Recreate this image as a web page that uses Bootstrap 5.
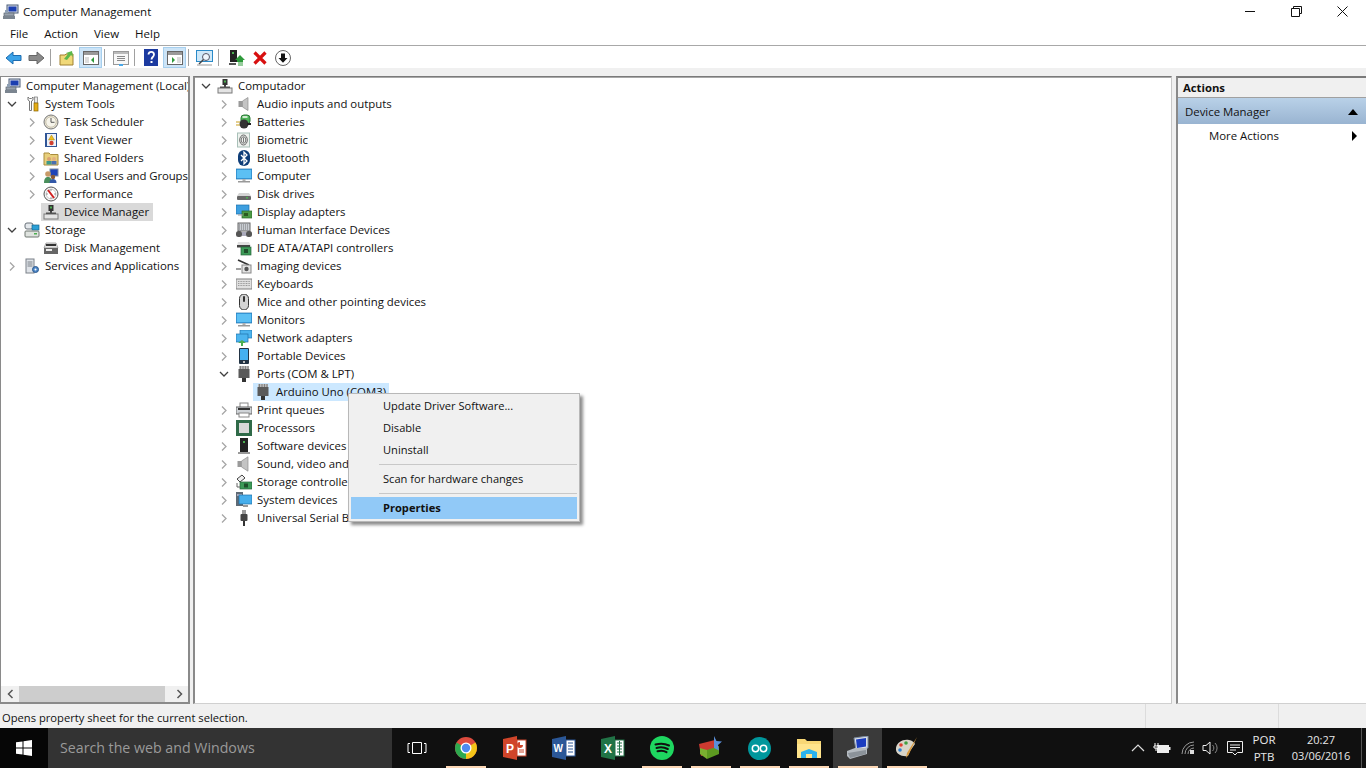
<!DOCTYPE html>
<html lang="en">
<head>
<meta charset="utf-8">
<title>Computer Management</title>
<link href="https://cdn.jsdelivr.net/npm/bootstrap@5.3.0/dist/css/bootstrap.min.css" rel="stylesheet">
<style>
html,body{height:100%;margin:0}
body{width:1366px;height:768px;overflow:hidden;background:#fff;font-family:"Open Sans","Noto Sans",sans-serif;font-size:11.4px;color:#111;line-height:18px}
svg{display:block;flex:none}
.title-row{height:23px;background:#fff}
.title-ico{margin:0 4px 0 3px}
.title-txt{font-size:11.5px}
.winbtn{width:46px;height:23px}
.win-wrap{padding-right:1px}
.menu-row{height:22px;background:#fff;padding-left:2px;font-size:11.5px}
.menu-item{padding:0 8px}
.tool-row{height:23px;background:#fff;border-top:1px solid #a8a8a8;padding:1px 0 0 2px}
.tb{width:23px;height:21px}
.tb-w{width:24px}
.tb-on{width:23px;height:21px;background:#cce4f7;border:1px solid #a6cfee}
.tb-gap{margin-left:1px}
.tb-gap2{margin-left:2px}
.tsep{width:1px;height:17px;background:#a0a0a0;margin:0 4px 0 2px}
.work{height:636px;background:#f0f0f0;padding-top:8px}
.left-pane{width:190px;border:1px solid #8a8a8a;border-width:1px 2px 2px 1px;background:#fff;overflow:hidden}
.left-scroll{height:16px;background:#f0f0f0;margin-top:auto}
.sc-btn{width:18px}
.sc-thumb{height:16px;width:146px;background:#cdcdcd}
.mid-pane{width:979px;margin-left:3px;background:#fff;border-top:1px solid #7a7a7a;box-shadow:inset 0 1px 0 #a8a8a8;border-left:2px solid #8a8a8a;border-right:1px solid #c8c8c8;border-bottom:1px solid #d0d0d0}
.right-pane{width:190px;margin-left:4px;background:#fff;border-top:2px solid #7a7a7a;border-left:2px solid #8a8a8a;border-bottom:1px solid #d0d0d0}
.tree-row{height:18px;white-space:nowrap;position:relative}
.chev{width:10px;height:18px}
.ico{width:16px;height:16px}
.pane-l0{padding-left:4px}
.lv1{padding-left:6px}
.lv2{padding-left:26px}
.lv2b{padding-left:40px}
.lv1 .gap-ico{margin-left:7px}
.lv2 .gap-ico{margin-left:6px}
.gap-txt{margin-left:5px}
.txt-tight{letter-spacing:-.1px}
.sel-grey{background:#d9d9d9;padding:0 4px 0 2px;height:18px}
.sel-blue{background:#cce8ff;padding:0 3px 0 2px;height:18px}
.m1{padding-left:24px}
.m0{padding-left:6px}
.m2{padding-left:58px}
.m-ico0{margin-left:6px}
.m-ico{margin-left:7px}
.m-txt{margin-left:5px}
.m-clip{display:block;max-width:92px;overflow:hidden}
.act-head{height:20px;background:#f0f0f0;font-weight:700;padding-left:5px;border-bottom:1px solid #a0a0a0;font-size:11.3px}
.act-sub{height:26px;padding:1px 8px 0 7px;background:linear-gradient(#b9d1e8,#99b4d1)}
.act-more{height:24px;padding:0 9px 0 31px}
.tri-up{width:0;height:0;border:5px solid transparent;border-bottom:6px solid #000;border-top:0}
.tri-right{width:0;height:0;border:5px solid transparent;border-left:5px solid #000;border-right:0}
.status{height:24px;background:#f0f0f0;padding-left:2px;font-size:11.2px}
.status-txt{padding-top:3px}
.stat-a{margin-left:auto;width:133px;height:24px;border-left:1px solid #dcdcdc}
.stat-b{width:88px;height:24px;border-left:1px solid #dcdcdc}
.task{height:40px;background:#101010;color:#fff;position:relative}
.start{width:48px;height:40px;background:#060606}
.search{width:344px;height:40px;background:#333;color:#9a9a9a;font-size:14.2px;padding-left:12px}
.tv{width:49px;height:40px}
.tapp{width:49px;height:40px;position:relative}
.tapp-on{background:#3a3a3a}
.tapp-run::after{content:"";position:absolute;left:5px;right:4px;bottom:0;height:2px;background:#fcd7b5}
.tray{margin-left:auto;margin-right:4px;height:40px;border-right:1px solid #555}
.t-gap6{margin-left:6px}
.t-gap10{margin-left:10px}
.tray-lang{width:34px;font-size:11.5px;line-height:17px;color:#e8e8e8}
.tray-clock{width:80px;font-size:11px;line-height:16px;color:#e8e8e8}
.pop{position:absolute;left:348px;top:393px;width:232px;height:129px;background:#f0f0f0;border:1px solid #b8b8b8;box-shadow:3px 3px 3px rgba(0,0,0,.45);padding:1px 2px 2px;z-index:5;font-size:11.1px}
.pop-item{height:22px;padding-left:32px;display:flex;align-items:center}
.pop-sep{height:1px;background:#c8c8c8;margin:3px 0 3px 28px}
.pop-sel{background:#91c9f7;font-weight:700}
</style>
</head>
<body>
<svg width="0" height="0" class="position-absolute">
<defs>
<symbol id="c-r" viewBox="0 0 10 18"><path d="M3 5.500 7 9.500 3 13.500" fill="none" stroke="#a6a6a6" stroke-width="1.300"/></symbol>
<symbol id="c-d" viewBox="0 0 10 18"><path d="M1 7 5 11 9 7" fill="none" stroke="#404040" stroke-width="1.300"/></symbol>
<symbol id="computer" viewBox="0 0 16 16"><rect x="4" y="1" width="11" height="8" fill="#d8dde6" stroke="#4a5c78"/><rect x="5.500" y="2.500" width="8" height="5" fill="#1c3fb0"/><rect x="1" y="9" width="10" height="3" fill="#9aa3ae" stroke="#5a6470" stroke-width=".7"/><rect x="0" y="12" width="12" height="3" fill="#7b8590"/><rect x="2" y="6" width="3" height="3" fill="#8fa0b4"/></symbol>
<symbol id="devmgr" viewBox="0 0 16 16"><rect x="5.500" y="1" width="5" height="6" fill="#333"/><rect x="7" y="2.500" width="2" height="2" fill="#4caf50"/><rect x="7" y="7" width="2" height="3" fill="#444"/><rect x="1" y="10" width="14" height="5" fill="#e4e4e4" stroke="#7a7a7a"/><rect x="3" y="8.500" width="10" height="1.600" fill="#555"/></symbol>
<symbol id="tools" viewBox="0 0 16 16"><path d="M4 1v3l1.500 1v9.500h2V5L9 4V1L7.500 2.500h-2z" fill="#fff" stroke="#777"/><rect x="10.500" y="1" width="3" height="6" fill="#e8e8e8" stroke="#777" stroke-width=".7"/><rect x="10" y="7" width="4" height="8" fill="#e5ad16" stroke="#8a6400" stroke-width=".7"/></symbol>
<symbol id="clock" viewBox="0 0 16 16"><circle cx="8" cy="8" r="7" fill="#e8e4d4" stroke="#777"/><circle cx="8" cy="8" r="5.200" fill="#f6f4ea" stroke="#b0a890" stroke-width=".6"/><path d="M8 4v4.300h3.500" fill="none" stroke="#555" stroke-width="1"/></symbol>
<symbol id="book" viewBox="0 0 16 16"><rect x="2" y="1" width="12" height="14" fill="#2f5597"/><rect x="4" y="2" width="9" height="12" fill="#eef2f8"/><path d="M8.500 3 11.500 8h-6z" fill="#f0c020" stroke="#8a6a00" stroke-width=".4"/><circle cx="8.500" cy="11" r="2.200" fill="#d04030"/></symbol>
<symbol id="share" viewBox="0 0 16 16"><path d="M1 3h5l1.500 1.500H15V15H1z" fill="#e8cf7c" stroke="#a88c3c"/><circle cx="6" cy="9" r="2" fill="#d9a070"/><rect x="3.500" y="11" width="5" height="3.500" fill="#3c9a8a"/><circle cx="11" cy="9" r="2" fill="#e2b080"/><rect x="8.500" y="11" width="5" height="3.500" fill="#4a70b0"/></symbol>
<symbol id="users" viewBox="0 0 16 16"><rect x="7" y="1" width="8" height="7" fill="#1d44b8" stroke="#7a8aa0"/><circle cx="5" cy="6" r="2.800" fill="#c89a68"/><path d="M1 15c0-5 2-6 4-6s4 1 4 6z" fill="#4a8f5c"/><circle cx="10" cy="9" r="2.200" fill="#8a5a34"/><path d="M6.500 15c0-3 1.500-4 3.500-4s3.500 1 3.500 4z" fill="#3358a8"/></symbol>
<symbol id="perf" viewBox="0 0 16 16"><circle cx="8" cy="8" r="7" fill="#f4f4f4" stroke="#555"/><circle cx="8" cy="8" r="4.800" fill="#fff" stroke="#aaa" stroke-width=".6"/><path d="M5 4 11 12" stroke="#d02020" stroke-width="2"/><path d="M8 3v2M8 11v2M3 8h2M11 8h2" stroke="#777" stroke-width=".7"/></symbol>
<symbol id="storage" viewBox="0 0 16 16"><rect x="1" y="1" width="8" height="6" rx="2" fill="#e4e8ec" stroke="#687078"/><rect x="8" y="3" width="7" height="5" fill="#2a9fd6" stroke="#18668c" stroke-width=".7"/><rect x="1" y="9" width="14" height="6" rx="1" fill="#dfe3df" stroke="#6f7770"/><rect x="10" y="11" width="3" height="1.500" fill="#4caf50"/></symbol>
<symbol id="disk" viewBox="0 0 16 16"><path d="M3 3h10l2 5H1z" fill="#e4e4e4" stroke="#8a8a8a" stroke-width=".7"/><rect x="3" y="4" width="10" height="2" fill="#333"/><rect x="1" y="8" width="14" height="6" fill="#666"/><rect x="3" y="9" width="6" height="2" fill="#eee"/></symbol>
<symbol id="svc" viewBox="0 0 16 16"><rect x="2" y="1" width="8" height="14" fill="#dfe3e8" stroke="#7a8088"/><path d="M3.500 4h5M3.500 6h5M3.500 8h5" stroke="#7a8088"/><circle cx="11.500" cy="11.500" r="3" fill="#4d86c6" stroke="#2c5a90"/><circle cx="11.500" cy="11.500" r="1" fill="#fff"/></symbol>
<symbol id="audio" viewBox="0 0 16 16"><rect x="2.500" y="5" width="4" height="6" fill="#9a9a9a"/><path d="M6.500 5 12 1.500v13L6.500 11z" fill="#c4c4c4" stroke="#8f8f8f" stroke-width=".7"/></symbol>
<symbol id="battery" viewBox="0 0 16 16"><rect x="5" y="1" width="9" height="9" rx="3" fill="#4fb65a" stroke="#2d7a38"/><rect x="6.500" y="2" width="5" height="2" fill="#cfeccf"/><circle cx="8" cy="10" r="4.500" fill="#333"/><path d="M0 8h4M0 11h4" stroke="#c9a020" stroke-width="1.200"/><path d="M11 10h4" stroke="#222" stroke-width="2"/></symbol>
<symbol id="finger" viewBox="0 0 16 16"><rect x="1.500" y="1" width="12" height="14" fill="#eef2ee" stroke="#a8c0b8"/><ellipse cx="7.500" cy="8" rx="3.800" ry="5" fill="none" stroke="#666"/><ellipse cx="7.500" cy="8" rx="2.300" ry="3.300" fill="none" stroke="#777"/><path d="M7.500 5.500v5" stroke="#777"/></symbol>
<symbol id="bt" viewBox="0 0 16 16"><rect x="2" y="0" width="12" height="16" rx="6" fill="#0f3d78"/><path d="M5 5 11 11 8 14V2l3 3-6 6" fill="none" stroke="#fff" stroke-width="1.300"/></symbol>
<symbol id="monitor" viewBox="0 0 16 16"><rect x="0" y="1" width="16" height="10" fill="#43a8ea" stroke="#1e6fa8" stroke-width=".7"/><rect x="1" y="2" width="14" height="8" fill="#5cc0f4"/><rect x="6.500" y="11" width="3" height="2" fill="#b0b0b0"/><rect x="2" y="13" width="12" height="1.500" fill="#999"/></symbol>
<symbol id="hdd" viewBox="0 0 16 16"><path d="M3 7h10l2 3H1z" fill="#d4d4d4"/><rect x="1" y="10" width="14" height="4" rx="1" fill="#666"/><rect x="10" y="11" width="2" height="1.500" fill="#4caf50"/></symbol>
<symbol id="display" viewBox="0 0 16 16"><rect x="0" y="1" width="13" height="9" fill="#3d9fe0" stroke="#1e6fa8" stroke-width=".7"/><rect x="6" y="7" width="10" height="7" fill="#4c9a44" stroke="#2c6a28" stroke-width=".7"/><rect x="8" y="9" width="4" height="3" fill="#2c5a20"/><path d="M2 11h5" stroke="#999"/></symbol>
<symbol id="hid" viewBox="0 0 16 16"><rect x="2" y="1" width="12" height="8" fill="#c8ccd2" stroke="#666"/><path d="M3 3h10M3 5h10M3 7h10" stroke="#777" stroke-dasharray="1 1"/><rect x="0" y="9" width="6" height="6" rx="2.500" fill="#555"/><rect x="10" y="9" width="6" height="6" rx="2.500" fill="#555"/><rect x="6" y="10" width="4" height="4" fill="#aab"/></symbol>
<symbol id="ide" viewBox="0 0 16 16"><path d="M2 2h11l2 4H1z" fill="#e0e0e0"/><rect x="1" y="5" width="13" height="2.500" fill="#444"/><rect x="5" y="7" width="10" height="8" fill="#3d9a58" stroke="#25653a" stroke-width=".7"/><rect x="8" y="9" width="4" height="4" fill="#1f4f2c"/></symbol>
<symbol id="cam" viewBox="0 0 16 16"><path d="M2 2 13 7" stroke="#333" stroke-width="1.600"/><rect x="6" y="7" width="9" height="8" fill="#e4e4e4" stroke="#888"/><circle cx="10.500" cy="11" r="2.200" fill="#555"/><path d="M0 11h5" stroke="#888" stroke-width="1.600"/></symbol>
<symbol id="kbd" viewBox="0 0 16 16"><rect x="0" y="3" width="16" height="10" fill="#e0e0e0" stroke="#808080"/><path d="M2 5.500h12M2 7.500h12M2 9.500h12" stroke="#9a9a9a" stroke-dasharray="1 .6"/></symbol>
<symbol id="mouse" viewBox="0 0 16 16"><rect x="3.500" y="0" width="9" height="16" rx="4.500" fill="#d4d4d4" stroke="#333"/><rect x="7" y="2" width="2" height="6" rx="1" fill="#333"/></symbol>
<symbol id="net" viewBox="0 0 16 16"><rect x="4" y="0" width="12" height="8" fill="#4cb4ee" stroke="#1e6fa8" stroke-width=".7"/><rect x="0" y="4" width="12" height="8" fill="#4cb4ee" stroke="#1e6fa8" stroke-width=".7"/><path d="M5 16V13H2l4-3 4 3H7v3z" fill="#4caf50"/></symbol>
<symbol id="portable" viewBox="0 0 16 16"><rect x="3" y="0" width="10" height="16" rx="1" fill="#223344"/><rect x="4" y="1" width="8" height="11" fill="#45b0f0"/><rect x="7" y="13" width="2" height="2" fill="#bbb"/></symbol>
<symbol id="port" viewBox="0 0 16 16"><rect x="3" y="0" width="10" height="3" fill="#b9b9b9"/><rect x="2.500" y="3" width="11" height="9" fill="#5a5a5a"/><path d="M4.500 0v3M7 0v3M9.500 0v3M12 0v3" stroke="#666" stroke-width=".7"/><rect x="6" y="12" width="4" height="4" fill="#333"/></symbol>
<symbol id="printer" viewBox="0 0 16 16"><rect x="4" y="1" width="8" height="5" fill="#fff" stroke="#888"/><rect x="0" y="5" width="16" height="7" fill="#d0d4d8" stroke="#666"/><rect x="2" y="6" width="12" height="2" fill="#333"/><rect x="3" y="11" width="10" height="4" fill="#fff" stroke="#888"/></symbol>
<symbol id="cpu" viewBox="0 0 16 16"><rect x="0" y="0" width="16" height="16" fill="#2f6a48"/><rect x="3" y="3" width="10" height="10" fill="#d8d8d8"/></symbol>
<symbol id="tower" viewBox="0 0 16 16"><rect x="4" y="0" width="8" height="14" fill="#222"/><rect x="7" y="3" width="2" height="2" fill="#4caf50"/><rect x="2" y="14" width="12" height="2" fill="#999"/></symbol>
<symbol id="sound" viewBox="0 0 16 16"><rect x="1.500" y="5" width="4" height="6" fill="#9a9a9a"/><path d="M5.500 5 12 .8v14.400L5.500 11z" fill="#c4c4c4" stroke="#8f8f8f" stroke-width=".7"/></symbol>
<symbol id="store" viewBox="0 0 16 16"><path d="M6 1 1 5l3 3 5-4z" fill="#f0f0f0" stroke="#444"/><rect x="4" y="8" width="12" height="7" fill="#3d9a58" stroke="#25653a" stroke-width=".7"/><rect x="8" y="9.500" width="4" height="4" fill="#1f4f2c"/><path d="M1 9v4h3" stroke="#666" fill="none"/></symbol>
<symbol id="sys" viewBox="0 0 16 16"><rect x="0" y="0" width="7" height="14" fill="#5f6b76"/><rect x="1" y="2" width="5" height="2" fill="#aab"/><rect x="3" y="3" width="13" height="9" fill="#46aeec" stroke="#1e6fa8" stroke-width=".7"/><rect x="7" y="13" width="5" height="2" fill="#999"/></symbol>
<symbol id="usb" viewBox="0 0 16 16"><rect x="6" y="0" width="4" height="4" fill="#9a9a9a"/><rect x="4.500" y="4" width="7" height="7" rx="1" fill="#444"/><rect x="7" y="11" width="2" height="5" fill="#333"/></symbol>
</defs>
</svg>

<div class="title-row d-flex align-items-center">
  <svg class="title-ico" width="16" height="16"><use href="#computer"/></svg>
  <span class="title-txt">Computer Management</span>
  <div class="ms-auto d-flex win-wrap">
    <div class="winbtn d-flex align-items-center justify-content-center"><svg width="11" height="11"><path d="M0 5.500h10" stroke="#111"/></svg></div>
    <div class="winbtn d-flex align-items-center justify-content-center"><svg width="11" height="11"><path d="M2.500 2.500V.5h8v7h-2M.5 2.500h8v8h-8z" fill="none" stroke="#111"/></svg></div>
    <div class="winbtn d-flex align-items-center justify-content-center"><svg width="11" height="11"><path d="M.5.500l10 10M10.500.500l-10 10" stroke="#111"/></svg></div>
  </div>
</div>

<div class="menu-row d-flex align-items-center">
  <span class="menu-item">File</span><span class="menu-item">Action</span><span class="menu-item">View</span><span class="menu-item">Help</span>
</div>

<div class="tool-row d-flex align-items-center">
  <div class="tb d-flex align-items-center justify-content-center"><svg width="17" height="14"><path d="M8 1 1 7l7 6V9.500h8v-5H8z" fill="#3ba2e8" stroke="#1c6cb0"/></svg></div>
  <div class="tb d-flex align-items-center justify-content-center"><svg width="17" height="14"><path d="M9 1l7 6-7 6V9.500H1v-5h8z" fill="#8a8a8a" stroke="#666"/></svg></div>
  <div class="tsep"></div>
  <div class="tb tb-w d-flex align-items-center justify-content-center"><svg width="16" height="16"><path d="M1 5h5l1-1h7v11H1z" fill="#f0d878" stroke="#a08030"/><path d="M5 9 9 4l-2-1 6-2 1 6-2-2-4 5z" fill="#5cb84a"/></svg></div>
  <div class="tb-on d-flex align-items-center justify-content-center"><svg width="16" height="14"><rect x=".5" y=".5" width="15" height="13" fill="#fff" stroke="#666"/><rect x="1" y="1" width="14" height="3" fill="#999"/><rect x="2" y="6" width="4" height="6" fill="#ddd"/><path d="M11 6v6l-3-3z" fill="#2e9a3a"/></svg></div>
  <div class="tsep"></div>
  <div class="tb d-flex align-items-center justify-content-center"><svg width="16" height="16"><rect x=".5" y="1.500" width="15" height="13" fill="#f8f8f8" stroke="#999"/><rect x="1" y="2" width="14" height="2" fill="#bbb"/><path d="M4 6.500h8M4 8.500h8M4 10.500h8" stroke="#888"/><rect x="6" y="14" width="4" height="2" fill="#4aa8e8"/></svg></div>
  <div class="tsep"></div>
  <div class="tb d-flex align-items-center justify-content-center"><svg width="14" height="17"><rect width="14" height="17" fill="#1c3aa0"/><path d="M4.500 5.500C4.500 2 10 2 10 5.500 10 8 7.500 8 7.500 10.500" fill="none" stroke="#fff" stroke-width="1.800"/><rect x="6.500" y="12" width="2" height="2" fill="#fff"/></svg></div>
  <div class="tb-on tb-gap d-flex align-items-center justify-content-center"><svg width="16" height="14"><rect x=".5" y=".5" width="15" height="13" fill="#fff" stroke="#666"/><rect x="1" y="1" width="14" height="3" fill="#999"/><rect x="10" y="6" width="4" height="6" fill="#ddd"/><path d="M5 6v6l3-3z" fill="#2e9a3a"/></svg></div>
  <div class="tsep"></div>
  <div class="tb d-flex align-items-center justify-content-center"><svg width="17" height="16"><rect x=".5" y=".5" width="16" height="11" fill="#cfe8f8" stroke="#2a8ac8"/><circle cx="10" cy="7" r="3.500" fill="#eef6fc" stroke="#556"/><path d="M7.500 9.500 3 14" stroke="#444" stroke-width="1.500"/><path d="M1 15h15" stroke="#999"/></svg></div>
  <div class="tsep"></div>
  <div class="tb tb-gap2 d-flex align-items-center justify-content-center"><svg width="16" height="16"><rect x="1" y="0" width="7" height="12" fill="#222"/><rect x="3" y="2" width="2" height="2" fill="#4caf50"/><rect x="0" y="13" width="7" height="2" fill="#555"/><path d="M8 12v-2H6l5-5 5 5h-2v2z" fill="#2e9a3a"/><path d="M9 13h5M9 15h5" stroke="#2e9a3a"/></svg></div>
  <div class="tb d-flex align-items-center justify-content-center"><svg width="14" height="14"><path d="M1.500 1.500l11 11M12.500 1.500l-11 11" stroke="#d81010" stroke-width="3.200"/></svg></div>
  <div class="tb d-flex align-items-center justify-content-center"><svg width="16" height="16"><circle cx="8" cy="8" r="7.500" fill="#fff" stroke="#666"/><path d="M6 3.500h4V8h2.500L8 12.800 3.500 8H6z" fill="#111"/></svg></div>
</div>

<div class="work d-flex">
  <div class="left-pane d-flex flex-column">
    <div class="flex-grow-1 overflow-hidden">
      <div class="tree-row pane-l0 d-flex align-items-center"><svg class="ico"><use href="#computer"/></svg><span class="gap-txt">Computer Management (Local)</span></div>
      <div class="tree-row lv1 d-flex align-items-center"><svg class="chev"><use href="#c-d"/></svg><svg class="ico gap-ico"><use href="#tools"/></svg><span class="gap-txt">System Tools</span></div>
      <div class="tree-row lv2 d-flex align-items-center"><svg class="chev"><use href="#c-r"/></svg><svg class="ico gap-ico"><use href="#clock"/></svg><span class="gap-txt">Task Scheduler</span></div>
      <div class="tree-row lv2 d-flex align-items-center"><svg class="chev"><use href="#c-r"/></svg><svg class="ico gap-ico"><use href="#book"/></svg><span class="gap-txt">Event Viewer</span></div>
      <div class="tree-row lv2 d-flex align-items-center"><svg class="chev"><use href="#c-r"/></svg><svg class="ico gap-ico"><use href="#share"/></svg><span class="gap-txt">Shared Folders</span></div>
      <div class="tree-row lv2 d-flex align-items-center"><svg class="chev"><use href="#c-r"/></svg><svg class="ico gap-ico"><use href="#users"/></svg><span class="gap-txt txt-tight">Local Users and Groups</span></div>
      <div class="tree-row lv2 d-flex align-items-center"><svg class="chev"><use href="#c-r"/></svg><svg class="ico gap-ico"><use href="#perf"/></svg><span class="gap-txt">Performance</span></div>
      <div class="tree-row lv2b d-flex align-items-center"><div class="sel-grey d-flex align-items-center"><svg class="ico"><use href="#devmgr"/></svg><span class="gap-txt">Device Manager</span></div></div>
      <div class="tree-row lv1 d-flex align-items-center"><svg class="chev"><use href="#c-d"/></svg><svg class="ico gap-ico"><use href="#storage"/></svg><span class="gap-txt">Storage</span></div>
      <div class="tree-row lv2 d-flex align-items-center"><svg class="chev invisible"><use href="#c-r"/></svg><svg class="ico gap-ico"><use href="#disk"/></svg><span class="gap-txt">Disk Management</span></div>
      <div class="tree-row lv1 d-flex align-items-center"><svg class="chev"><use href="#c-r"/></svg><svg class="ico gap-ico"><use href="#svc"/></svg><span class="gap-txt">Services and Applications</span></div>
    </div>
    <div class="left-scroll d-flex align-items-center">
      <div class="sc-btn d-flex justify-content-center"><svg width="7" height="10"><path d="M5.500 1 1.500 5l4 4" fill="none" stroke="#555" stroke-width="1.500"/></svg></div>
      <div class="sc-thumb"></div>
      <div class="sc-btn ms-auto d-flex justify-content-center"><svg width="7" height="10"><path d="M1.500 1l4 4-4 4" fill="none" stroke="#555" stroke-width="1.500"/></svg></div>
    </div>
  </div>

  <div class="mid-pane">
    <div class="tree-row m0 d-flex align-items-center"><svg class="chev"><use href="#c-d"/></svg><svg class="ico m-ico0"><use href="#devmgr"/></svg><span class="m-txt">Computador</span></div>
    <div class="tree-row m1 d-flex align-items-center"><svg class="chev"><use href="#c-r"/></svg><svg class="ico m-ico"><use href="#audio"/></svg><span class="m-txt">Audio inputs and outputs</span></div>
    <div class="tree-row m1 d-flex align-items-center"><svg class="chev"><use href="#c-r"/></svg><svg class="ico m-ico"><use href="#battery"/></svg><span class="m-txt">Batteries</span></div>
    <div class="tree-row m1 d-flex align-items-center"><svg class="chev"><use href="#c-r"/></svg><svg class="ico m-ico"><use href="#finger"/></svg><span class="m-txt">Biometric</span></div>
    <div class="tree-row m1 d-flex align-items-center"><svg class="chev"><use href="#c-r"/></svg><svg class="ico m-ico"><use href="#bt"/></svg><span class="m-txt">Bluetooth</span></div>
    <div class="tree-row m1 d-flex align-items-center"><svg class="chev"><use href="#c-r"/></svg><svg class="ico m-ico"><use href="#monitor"/></svg><span class="m-txt">Computer</span></div>
    <div class="tree-row m1 d-flex align-items-center"><svg class="chev"><use href="#c-r"/></svg><svg class="ico m-ico"><use href="#hdd"/></svg><span class="m-txt">Disk drives</span></div>
    <div class="tree-row m1 d-flex align-items-center"><svg class="chev"><use href="#c-r"/></svg><svg class="ico m-ico"><use href="#display"/></svg><span class="m-txt">Display adapters</span></div>
    <div class="tree-row m1 d-flex align-items-center"><svg class="chev"><use href="#c-r"/></svg><svg class="ico m-ico"><use href="#hid"/></svg><span class="m-txt">Human Interface Devices</span></div>
    <div class="tree-row m1 d-flex align-items-center"><svg class="chev"><use href="#c-r"/></svg><svg class="ico m-ico"><use href="#ide"/></svg><span class="m-txt">IDE ATA/ATAPI controllers</span></div>
    <div class="tree-row m1 d-flex align-items-center"><svg class="chev"><use href="#c-r"/></svg><svg class="ico m-ico"><use href="#cam"/></svg><span class="m-txt">Imaging devices</span></div>
    <div class="tree-row m1 d-flex align-items-center"><svg class="chev"><use href="#c-r"/></svg><svg class="ico m-ico"><use href="#kbd"/></svg><span class="m-txt">Keyboards</span></div>
    <div class="tree-row m1 d-flex align-items-center"><svg class="chev"><use href="#c-r"/></svg><svg class="ico m-ico"><use href="#mouse"/></svg><span class="m-txt">Mice and other pointing devices</span></div>
    <div class="tree-row m1 d-flex align-items-center"><svg class="chev"><use href="#c-r"/></svg><svg class="ico m-ico"><use href="#monitor"/></svg><span class="m-txt">Monitors</span></div>
    <div class="tree-row m1 d-flex align-items-center"><svg class="chev"><use href="#c-r"/></svg><svg class="ico m-ico"><use href="#net"/></svg><span class="m-txt">Network adapters</span></div>
    <div class="tree-row m1 d-flex align-items-center"><svg class="chev"><use href="#c-r"/></svg><svg class="ico m-ico"><use href="#portable"/></svg><span class="m-txt">Portable Devices</span></div>
    <div class="tree-row m1 d-flex align-items-center"><svg class="chev"><use href="#c-d"/></svg><svg class="ico m-ico"><use href="#port"/></svg><span class="m-txt">Ports (COM &amp; LPT)</span></div>
    <div class="tree-row m2 d-flex align-items-center"><div class="sel-blue d-flex align-items-center"><svg class="ico"><use href="#port"/></svg><span class="m-txt">Arduino Uno (COM3)</span></div></div>
    <div class="tree-row m1 d-flex align-items-center"><svg class="chev"><use href="#c-r"/></svg><svg class="ico m-ico"><use href="#printer"/></svg><span class="m-txt">Print queues</span></div>
    <div class="tree-row m1 d-flex align-items-center"><svg class="chev"><use href="#c-r"/></svg><svg class="ico m-ico"><use href="#cpu"/></svg><span class="m-txt">Processors</span></div>
    <div class="tree-row m1 d-flex align-items-center"><svg class="chev"><use href="#c-r"/></svg><svg class="ico m-ico"><use href="#tower"/></svg><span class="m-txt">Software devices</span></div>
    <div class="tree-row m1 d-flex align-items-center"><svg class="chev"><use href="#c-r"/></svg><svg class="ico m-ico"><use href="#sound"/></svg><span class="m-txt">Sound, video and game controllers</span></div>
    <div class="tree-row m1 d-flex align-items-center"><svg class="chev"><use href="#c-r"/></svg><svg class="ico m-ico"><use href="#store"/></svg><span class="m-txt">Storage controllers</span></div>
    <div class="tree-row m1 d-flex align-items-center"><svg class="chev"><use href="#c-r"/></svg><svg class="ico m-ico"><use href="#sys"/></svg><span class="m-txt">System devices</span></div>
    <div class="tree-row m1 d-flex align-items-center"><svg class="chev"><use href="#c-r"/></svg><svg class="ico m-ico"><use href="#usb"/></svg><span class="m-txt m-clip">Universal Serial Bus controllers</span></div>
  </div>

  <div class="right-pane">
    <div class="act-head d-flex align-items-center">Actions</div>
    <div class="act-sub d-flex align-items-center justify-content-between"><span>Device Manager</span><span class="tri-up"></span></div>
    <div class="act-more d-flex align-items-center justify-content-between"><span>More Actions</span><span class="tri-right"></span></div>
  </div>
</div>

<div class="status d-flex align-items-center">
  <span class="status-txt">Opens property sheet for the current selection.</span>
  <div class="stat-a"></div><div class="stat-b"></div>
</div>

<div class="task d-flex align-items-center">
  <div class="start d-flex align-items-center justify-content-center"><svg width="16" height="16"><path d="M0 2.300 6.500 1.400V7.500H0zM7.500 1.300 16 0V7.500H7.500zM0 8.500H6.500V14.600L0 13.700zM7.500 8.500H16V16L7.500 14.700z" fill="#fff"/></svg></div>
  <div class="search d-flex align-items-center">Search the web and Windows</div>
  <div class="tv d-flex align-items-center justify-content-center"><svg width="20" height="14"><path d="M5.500 1.500h9v11h-9zM3 2.500H1v9h2M17 2.500h2v9h-2" fill="none" stroke="#fff"/></svg></div>
  <div class="tapp tapp-run d-flex align-items-center justify-content-center"><svg width="24" height="24" viewBox="0 0 24 24"><circle cx="12" cy="12" r="11" fill="#dd4b3e"/><path d="M12 12 21.500 6.500A11 11 0 0 1 12 23z" fill="#f5c518"/><path d="M12 12 12 23A11 11 0 0 1 2.500 6.500z" fill="#2da94f"/><circle cx="12" cy="12" r="5.500" fill="#fff"/><circle cx="12" cy="12" r="4.200" fill="#4d8bf0"/></svg></div>
  <div class="tapp d-flex align-items-center justify-content-center"><svg width="24" height="24"><path d="M0 3 14 0V24L0 21z" fill="#d0452a"/><rect x="14" y="4" width="9" height="16" fill="#fff" stroke="#c8452a"/><path d="M16 14h5M16 16h5" stroke="#c8452a"/><path d="M17 6a3 3 0 1 0 3 3h-3z" fill="#d0452a"/><text x="3" y="17" fill="#fff" font-family="Liberation Sans" font-weight="700" font-size="12">P</text></svg></div>
  <div class="tapp d-flex align-items-center justify-content-center"><svg width="24" height="24"><path d="M0 3 14 0V24L0 21z" fill="#2b5797"/><rect x="14" y="4" width="9" height="16" fill="#fff" stroke="#2b5797"/><path d="M16 7h5M16 10h5M16 13h5M16 16h5" stroke="#2b5797"/><text x="1.500" y="16" fill="#fff" font-family="Liberation Sans" font-weight="700" font-size="10">W</text></svg></div>
  <div class="tapp d-flex align-items-center justify-content-center"><svg width="24" height="24"><path d="M0 3 14 0V24L0 21z" fill="#217346"/><rect x="14" y="4" width="9" height="16" fill="#fff" stroke="#217346"/><path d="M16 7h5M16 10h5M16 13h5M16 16h5M18.500 5v14" stroke="#217346"/><text x="3" y="17" fill="#fff" font-family="Liberation Sans" font-weight="700" font-size="12">X</text></svg></div>
  <div class="tapp tapp-run d-flex align-items-center justify-content-center"><svg width="24" height="24"><circle cx="12" cy="12" r="12" fill="#1ed760"/><path d="M5.500 8.500C10 7.200 15 7.500 19 9.500M6.500 12C10 11 14.500 11.300 17.800 13M7.500 15.300C10.500 14.500 14 14.700 16.500 16.200" fill="none" stroke="#101010" stroke-width="2" stroke-linecap="round"/></svg></div>
  <div class="tapp tapp-run d-flex align-items-center justify-content-center"><svg width="24" height="24"><path d="M0 8 16 4 20 12 8 18 2 20z" fill="#cc3a30"/><path d="M1 12 8 14V23L1 18z" fill="#7ab030"/><path d="M8 14 20 10V18L8 23z" fill="#5c9a20"/><path d="M15 0 17.500 5 23 5.500 19 9 20 14.500 15 12z" fill="#5b8fd9"/></svg></div>
  <div class="tapp tapp-run d-flex align-items-center justify-content-center"><svg width="23" height="23"><circle cx="11.500" cy="11.500" r="11.500" fill="#00979c"/><circle cx="7.500" cy="11.500" r="3.200" fill="none" stroke="#fff" stroke-width="1.500"/><circle cx="15.500" cy="11.500" r="3.200" fill="none" stroke="#fff" stroke-width="1.500"/></svg></div>
  <div class="tapp tapp-run d-flex align-items-center justify-content-center"><svg width="24" height="20"><path d="M0 1h8l2 2h14v17H0z" fill="#f8d775"/><rect x="0" y="6" width="24" height="14" fill="#ffe48c"/><path d="M4 20v-6l8-3 8 3v6h-5v-4H9v4z" fill="#2bb3ee"/></svg></div>
  <div class="tapp tapp-on tapp-run d-flex align-items-center justify-content-center"><svg width="24" height="24"><path d="M8 2 22 0V12L10 14z" fill="#d8dde6" stroke="#7a8a9e"/><path d="M10 3.500 20 2V10.500L11 12z" fill="#1a3cc0"/><path d="M1 15 9 12 21 12V18L4 23 1 20z" fill="#b4bac0"/><path d="M2 17 20 14V18L4 22z" fill="#8b9299"/></svg></div>
  <div class="tapp tapp-run d-flex align-items-center justify-content-center"><svg width="24" height="24"><path d="M1 12C2 6 8 3 14 4 17 4.500 19 6 20 8L15 15 13 20C7 21 0 18 1 12z" fill="#d8d4c8"/><circle cx="6" cy="9" r="1.800" fill="#e04030"/><circle cx="11" cy="7" r="1.800" fill="#40a040"/><circle cx="5" cy="14" r="1.800" fill="#3080d0"/><path d="M22 1 14 18 11 22 12 17z" fill="#d8983a"/></svg></div>

  <div class="tray d-flex align-items-center">
    <svg width="14" height="8"><path d="M1 7 7 1l6 6" fill="none" stroke="#ddd" stroke-width="1.200"/></svg>
    <svg width="18" height="12" class="ms-2"><rect x="4.500" y="3.500" width="11" height="7" fill="#eee" stroke="#eee"/><path d="M2 1v3M5 1v3M1 4h4v2H1zM3 6v3" stroke="#fff"/><rect x="16" y="5" width="1.500" height="3" fill="#eee"/></svg>
    <svg width="15" height="14" class="t-gap10"><path d="M1 13a12 12 0 0 1 12-12M4 13a9 9 0 0 1 9-9M7 13a6 6 0 0 1 6-6" fill="none" stroke="#999"/><rect x="9" y="9" width="4" height="4" fill="#ddd"/></svg>
    <svg width="17" height="14" class="t-gap6"><path d="M1 4.500h3L8 1v12L4 9.500H1z" fill="none" stroke="#eee"/><path d="M10.500 4a4 4 0 0 1 0 6M13 2a7 7 0 0 1 0 10" fill="none" stroke="#888"/></svg>
    <svg width="16" height="15" class="ms-2"><path d="M.5.500h15v11h-5L8 14l-2.500-2.500h-5z" fill="none" stroke="#eee"/><path d="M3 4h10M3 6.500h10M3 9h6" stroke="#eee"/></svg>
    <div class="tray-lang text-center ms-1">POR<br>PTB</div>
    <div class="tray-clock text-center">20:27<br>03/06/2016</div>
  </div>
</div>

<div class="pop">
  <div class="pop-item">Update Driver Software...</div>
  <div class="pop-item">Disable</div>
  <div class="pop-item">Uninstall</div>
  <div class="pop-sep"></div>
  <div class="pop-item">Scan for hardware changes</div>
  <div class="pop-sep"></div>
  <div class="pop-item pop-sel">Properties</div>
</div>

<script src="https://cdn.jsdelivr.net/npm/bootstrap@5.3.0/dist/js/bootstrap.bundle.min.js"></script>
</body>
</html>
